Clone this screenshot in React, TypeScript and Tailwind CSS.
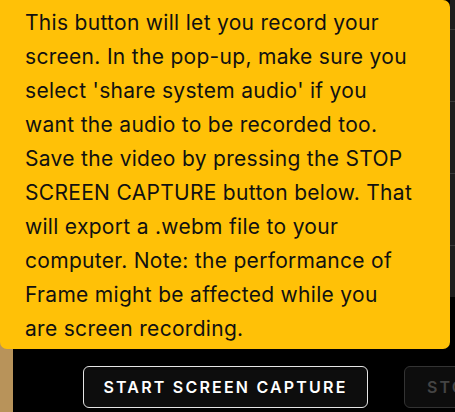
import React from "react";

const lines = [
  "This button will let you record your",
  "screen. In the pop-up, make sure you",
  "select 'share system audio' if you",
  "want the audio to be recorded too.",
  "Save the video by pressing the STOP",
  "SCREEN CAPTURE button below. That",
  "will export a .webm file to your",
  "computer. Note: the performance of",
  "Frame might be affected while you",
  "are screen recording.",
];

export default function App() {
  return (
    <div
      className="relative w-[455px] h-[412px] overflow-hidden bg-black"
      style={{ fontFamily: "Inter, 'Noto Sans', sans-serif" }}
    >
      <div className="flex h-full">
        <div className="w-[13px] shrink-0 h-full bg-[#b8935a]" />
        <div className="flex-1 min-w-0 flex flex-col">
          <div className="flex-1 flex justify-end">
            <div className="w-[5px] h-[297px] bg-[#1e1e1e] flex flex-col">
              <div className="h-[30px] border-b border-[#3a3a3a]" />
              <div className="h-[72px] border-b border-[#3a3a3a]" />
              <div className="h-[72px] border-b border-[#3a3a3a]" />
              <div className="h-[72px] border-b border-[#3a3a3a]" />
            </div>
          </div>
          <div className="h-[62px] shrink-0 flex items-start gap-[36px] pl-[70px] pt-[16px]">
            <button className="shrink-0 w-[285px] h-[42px] rounded-[6px] border border-[#e5e5e5] bg-[#0d0d0d] text-white text-[16px] font-semibold tracking-[2.2px]">
              START SCREEN CAPTURE
            </button>
            <button className="shrink-0 w-[285px] h-[42px] rounded-[6px] border border-[#333] bg-[#0d0d0d] text-[#444] text-[16px] font-semibold tracking-[2.2px] text-left pl-[22px]">
              STOP SCREEN CAPTURE
            </button>
          </div>
        </div>
      </div>
      <div className="absolute left-0 top-0 w-[450px] h-[349px] bg-[#ffc107] rounded-[7px] rounded-tl-none pl-[25px] pt-[6px] text-[#111] text-[21px] leading-[34px] tracking-[0.3px]">
        {lines.map((l, i) => (
          <div key={i} className="whitespace-nowrap">
            {l}
          </div>
        ))}
      </div>
    </div>
  );
}
